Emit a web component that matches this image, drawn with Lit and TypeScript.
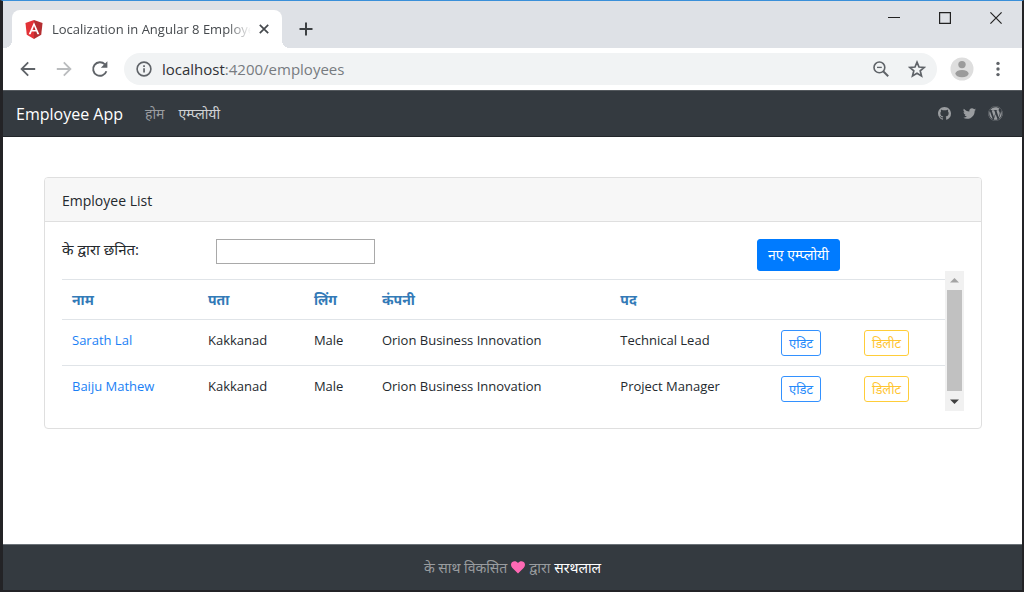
import { LitElement, html, css } from "lit";
import { customElement, state } from "lit/decorators.js";

interface Employee {
  name: string;
  address: string;
  gender: string;
  company: string;
  designation: string;
}

const EMPLOYEES: Employee[] = [
  { name: "Sarath Lal", address: "Kakkanad", gender: "Male", company: "Orion Business Innovation", designation: "Technical Lead" },
  { name: "Baiju Mathew", address: "Kakkanad", gender: "Male", company: "Orion Business Innovation", designation: "Project Manager" },
];

const resets = css`
  :host { display: block; }
  * { box-sizing: border-box; }
  svg { display: block; flex: none; }
  button, input { font: inherit; margin: 0; }
  a { text-decoration: none; color: inherit; }
`;

@customElement("browser-chrome")
export class BrowserChrome extends LitElement {
  static styles = [
    resets,
    css`
      .tabs { display: flex; align-items: flex-end; height: 47px; background: #dee1e6; padding-left: 9px; }
      .tab {
        display: flex; align-items: center; position: relative;
        width: 270px; height: 38px; padding: 0 12px 0 13px;
        background: #fff; border-radius: 8px 8px 0 0;
      }
      .tab::before, .tab::after { content: ""; position: absolute; bottom: 0; width: 8px; height: 8px; }
      .tab::before { left: -8px; background: radial-gradient(circle at 0 0, transparent 8px, #fff 8px); }
      .tab::after { right: -8px; background: radial-gradient(circle at 100% 0, transparent 8px, #fff 8px); }
      .title {
        flex: 1; min-width: 0; margin: 0 7px 0 9px; overflow: hidden; white-space: nowrap;
        font-size: 13px; line-height: 20px; color: #45494d;
        mask-image: linear-gradient(to right, #000 88%, transparent);
      }
      .icon { display: grid; place-items: center; border: 0; padding: 0; background: none; color: #5f6368; }
      .new { width: 48px; height: 38px; color: #3c4043; }
      .caption { display: flex; margin-left: auto; padding-right: 1px; align-self: flex-start; }
      .caption .icon { width: 51px; height: 34px; color: #222; }
      .toolbar { display: flex; align-items: center; height: 42px; padding: 0 6px 0 7px; background: #fff; }
      .toolbar .icon { width: 36px; height: 36px; }
      .toolbar .off { color: #babcbe; }
      .address {
        display: flex; align-items: center; flex: 1; height: 32px; min-width: 0;
        margin: 0 7px 0 6px; padding: 0 2px; background: #f1f3f4; border-radius: 16px;
      }
      .url { flex: 1; font-size: 15px; line-height: 24px; color: #777b80; }
      .host { color: #303236; }
    `,
  ];

  render() {
    return html`
      <div class="tabs">
        <div class="tab">
          <svg width="18" height="19" viewBox="0 0 18 20">
            <path fill="#e23237" d="M9 0 0 3.2l1.4 12.2L9 20z" />
            <path fill="#b52e31" d="M9 0l9 3.2-1.4 12.2L9 20z" />
            <path fill="#fff" fill-rule="evenodd" d="M9 2.4 3.4 15h2.1l1.1-2.8h4.8l1.1 2.8h2.1zM9 6.3l1.6 4.1H7.4z" />
          </svg>
          <div class="title">Localization in Angular 8 Employee</div>
          <button class="icon" aria-label="Close tab">
            <svg width="12" height="12" viewBox="0 0 12 12" stroke="#45494d" stroke-width="1.7"><path d="M1.8 1.8l8.4 8.4M10.2 1.8L1.8 10.2" /></svg>
          </button>
        </div>
        <button class="icon new" aria-label="New tab">
          <svg width="14" height="14" viewBox="0 0 14 14" stroke="currentColor" stroke-width="2"><path d="M7 .5v13M.5 7h13" /></svg>
        </button>
        <div class="caption">
          <button class="icon" aria-label="Minimize">
            <svg width="12" height="12" viewBox="0 0 12 12" stroke="currentColor"><path d="M0 5.500h12" /></svg>
          </button>
          <button class="icon" aria-label="Maximize">
            <svg width="12" height="12" viewBox="0 0 12 12" fill="none" stroke="currentColor" stroke-width="1.2"><path d="M.6 .6h10.8v10.8H.6z" /></svg>
          </button>
          <button class="icon" aria-label="Close">
            <svg width="12" height="12" viewBox="0 0 12 12" stroke="currentColor" stroke-width="1.2"><path d="M.4 .4l11.2 11.2M11.6 .4L.4 11.6" /></svg>
          </button>
        </div>
      </div>
      <div class="toolbar">
        <button class="icon" aria-label="Back">
          <svg width="16" height="16" viewBox="0 0 16 16" fill="none" stroke="currentColor" stroke-width="1.8"><path d="M15.2 8H2M8.2 1.4L1.6 8l6.6 6.6" /></svg>
        </button>
        <button class="icon off" aria-label="Forward">
          <svg width="16" height="16" viewBox="0 0 16 16" fill="none" stroke="currentColor" stroke-width="1.8"><path d="M.8 8H14M7.8 1.4L14.4 8l-6.6 6.6" /></svg>
        </button>
        <button class="icon" aria-label="Reload">
          <svg width="18" height="18" viewBox="0 0 18 18"><path fill="none" stroke="currentColor" stroke-width="1.9" d="M15.4 11.2A6.8 6.8 0 1 1 13.9 4.3" /><path fill="currentColor" d="M16.4 1.2v6.6H9.8z" /></svg>
        </button>
        <div class="address">
          <button class="icon" aria-label="Site information">
            <svg width="16" height="16" viewBox="0 0 16 16"><circle cx="8" cy="8" r="6.9" fill="none" stroke="currentColor" stroke-width="1.6" /><path fill="currentColor" d="M7.2 7.2h1.7v4.4H7.2zM7.2 4.3h1.7V6H7.2z" /></svg>
          </button>
          <div class="url"><span class="host">localhost</span>:4200/employees</div>
          <button class="icon" aria-label="Zoom">
            <svg width="16" height="16" viewBox="0 0 16 16" fill="none" stroke="currentColor" stroke-width="1.6"><circle cx="6.4" cy="6.4" r="5.4" /><path d="M4 6.4h4.8" stroke-width="1.3" /><path d="M10.2 10.2l5 5" stroke-width="2" /></svg>
          </button>
          <button class="icon" aria-label="Bookmark">
            <svg width="18" height="18" viewBox="0 0 18 18" fill="none" stroke="currentColor" stroke-width="1.7"><path d="M9 2.2l2 4.8 5.2.4-4 3.4 1.3 5.1L9 13.2l-4.5 2.7 1.3-5.1-4-3.4L7 7z" /></svg>
          </button>
        </div>
        <button class="icon" aria-label="Profile">
          <svg width="24" height="24" viewBox="0 0 24 24"><circle cx="12" cy="12" r="11.5" fill="#dedede" /><circle cx="12" cy="7.600" r="3.7" fill="#9b9b9b" /><ellipse cx="12" cy="16.6" rx="6.6" ry="3.6" fill="#9b9b9b" /></svg>
        </button>
        <button class="icon" aria-label="Menu">
          <svg width="4" height="16" viewBox="0 0 4 16" fill="currentColor"><circle cx="2" cy="2.4" r="1.7" /><circle cx="2" cy="8" r="1.7" /><circle cx="2" cy="13.6" r="1.7" /></svg>
        </button>
      </div>
    `;
  }
}

@customElement("app-navbar")
export class AppNavbar extends LitElement {
  static styles = [
    resets,
    css`
      nav {
        display: flex; align-items: center; height: 47px; padding: 0 19px 0 13px;
        background: #343a40; border-top: 1px solid #54595e; border-bottom: 1px solid #22262a; color: #9a9da0;
      }
      .brand { font-size: 16px; line-height: 24px; color: #fff; margin-right: 22px; }
      .links { display: flex; gap: 14px; font-size: 14px; line-height: 24px; }
      .active { color: #d0d2d4; }
      .social { display: flex; align-items: center; gap: 12px; margin-left: auto; }
    `,
  ];

  render() {
    return html`
      <nav>
        <a class="brand" href="#">Employee App</a>
        <div class="links">
          <a href="#home">होम</a>
          <a class="active" href="#employees">एम्प्लोयी</a>
        </div>
        <div class="social">
          <a href="#github" aria-label="GitHub">
            <svg width="13" height="13" viewBox="0 0 16 16" fill="currentColor"><path d="M8 0C3.58 0 0 3.58 0 8c0 3.54 2.29 6.53 5.47 7.59.4.07.55-.17.55-.38 0-.19-.01-.82-.01-1.49-2.01.37-2.53-.49-2.69-.94-.09-.23-.48-.94-.82-1.13-.28-.15-.68-.52-.01-.53.63-.01 1.08.58 1.23.82.72 1.21 1.87.87 2.33.66.07-.52.28-.87.51-1.07-1.78-.2-3.64-.89-3.64-3.95 0-.87.31-1.59.82-2.15-.08-.2-.36-1.02.08-2.12 0 0 .67-.21 2.2.82.64-.18 1.32-.27 2-.27s1.36.09 2 .27c1.53-1.04 2.2-.82 2.2-.82.44 1.1.16 1.92.08 2.12.51.56.82 1.27.82 2.15 0 3.07-1.87 3.75-3.65 3.95.29.25.54.73.54 1.48 0 1.07-.01 1.93-.01 2.2 0 .21.15.46.55.38A8 8 0 0 0 16 8c0-4.42-3.58-8-8-8z" /></svg>
          </a>
          <a href="#twitter" aria-label="Twitter">
            <svg width="13" height="13" viewBox="0 0 24 24" fill="currentColor"><path d="M23.95 4.57a10 10 0 0 1-2.82.77 4.96 4.96 0 0 0 2.16-2.72c-.95.55-2 .96-3.13 1.18a4.92 4.92 0 0 0-8.38 4.48C7.69 8.1 4.07 6.13 1.64 3.16a4.92 4.92 0 0 0 1.52 6.57 4.9 4.9 0 0 1-2.23-.61v.06a4.92 4.92 0 0 0 3.95 4.83 5 5 0 0 1-2.21.08 4.94 4.94 0 0 0 4.6 3.42A9.87 9.87 0 0 1 0 19.54a13.99 13.99 0 0 0 7.55 2.21c9.05 0 14-7.5 14-13.98 0-.21 0-.42-.02-.63a9.94 9.94 0 0 0 2.42-2.57z" /></svg>
          </a>
          <a href="#wordpress" aria-label="WordPress">
            <svg width="15" height="15" viewBox="0 0 512 512" fill="currentColor"><path d="M61.7 169.4l101.5 278C92.2 413 43.3 340.2 43.3 256c0-30.9 6.6-60.1 18.4-86.6zm337.9 75.9c0-26.3-9.4-44.5-17.5-58.7-10.8-17.5-20.9-32.4-20.9-49.9 0-19.6 14.8-37.8 35.7-37.8.9 0 1.8.1 2.8.2-37.9-34.7-88.3-55.9-143.7-55.9-74.3 0-139.7 38.1-177.8 95.9 5 .2 9.7.3 13.7.3 22.2 0 56.7-2.7 56.7-2.7 11.5-.7 12.8 16.2 1.4 17.5 0 0-11.5 1.3-24.3 2l77.5 230.4L249.8 247l-33.1-90.8c-11.5-.7-22.3-2-22.3-2-11.5-.7-10.1-18.2 1.3-17.5 0 0 35.1 2.7 56 2.7 22.2 0 56.7-2.7 56.7-2.7 11.5-.7 12.8 16.2 1.4 17.5 0 0-11.5 1.3-24.3 2l76.9 228.7 21.2-70.9c9-29.4 16-50.5 16-68.7zm-139.9 29.3l-63.8 185.5c19.1 5.6 39.2 8.7 60.1 8.7 24.8 0 48.5-4.3 70.6-12.1-.6-.9-1.1-1.9-1.5-2.9l-65.4-179.2zm183-120.7c.9 6.8 1.4 14 1.4 21.9 0 21.6-4 45.8-16.2 76.2l-65 187.9C426.2 403 468.7 334.5 468.7 256c0-37-9.4-71.8-26-102.1zM504 256c0 136.8-111.3 248-248 248C119.2 504 8 392.7 8 256 8 119.2 119.2 8 256 8c136.7 0 248 111.2 248 248zm-11.4 0c0-130.5-106.2-236.6-236.6-236.6C125.5 19.4 19.4 125.5 19.4 256S125.6 492.6 256 492.6c130.5 0 236.6-106.1 236.6-236.6z" /></svg>
          </a>
        </div>
      </nav>
    `;
  }
}

@customElement("employee-list")
export class EmployeeList extends LitElement {
  static styles = [
    resets,
    css`
      .card { border: 1px solid #dfdfdf; border-radius: 4px; background: #fff; color: #24292e; }
      .head {
        margin: 0; padding: 11px 17px 9px; background: #f7f7f7; border-bottom: 1px solid #dfdfdf;
        border-radius: 3px 3px 0 0; font-size: 14px; line-height: 23px; font-weight: 400;
      }
      .body { padding: 17px; }
      .filter { display: grid; grid-template-columns: 154px 1fr 207px; align-items: start; height: 32px; }
      .filter label { font-size: 15px; line-height: 20px; }
      .filter input { width: 159px; height: 25px; padding: 2px 4px; border: 1px solid #a9a9a9; background: #fff; font-size: 14px; }
      .btn { border-radius: 3px; white-space: nowrap; }
      .primary { justify-self: start; height: 32px; padding: 0 10px; border: 1px solid #007bff; background: #007bff; color: #fff; font-size: 14px; line-height: 30px; }
      .scroller { display: grid; grid-template-columns: minmax(0, 1fr) 19px; }
      table { width: 100%; margin-top: 8px; border-collapse: collapse; table-layout: fixed; font-size: 13px; line-height: 20px; }
      th, td { padding: 10px 10px 9px; text-align: left; vertical-align: top; border-top: 1px solid #e0e4e8; white-space: nowrap; }
      th { color: #337ab7; font-size: 14px; font-weight: 700; }
      td a { color: #1a7ff5; }
      .name { width: 15.4%; }
      .address { width: 12%; }
      .gender { width: 7.7%; }
      .company { width: 27%; }
      .designation { width: 18.2%; }
      .edit { width: 9.4%; }
      .small { height: 26px; padding: 0 7px; background: #fff; font-size: 13px; line-height: 24px; vertical-align: top; }
      .outline-primary { border: 1px solid #3391ff; color: #2589fb; }
      .outline-warning { border: 1px solid #ffcd39; color: #ffc530; }
      .track { display: grid; grid-template-rows: 19px 1fr 20px; background: #f1f1f1; justify-items: center; align-items: center; }
      .thumb { width: 15px; height: 100%; background: #c1c1c1; }
    `,
  ];

  @state() private query = "";

  private get rows(): Employee[] {
    const q = this.query.toLowerCase();
    return EMPLOYEES.filter((e) => e.name.toLowerCase().includes(q));
  }

  render() {
    return html`
      <section class="card">
        <h2 class="head">Employee List</h2>
        <div class="body">
          <div class="filter">
            <label for="filter">के द्वारा छनित:</label>
            <input id="filter" type="text" .value=${this.query} @input=${(e: Event) => (this.query = (e.target as HTMLInputElement).value)} />
            <button class="btn primary">नए एम्प्लोयी</button>
          </div>
          <div class="scroller">
            <table>
              <thead>
                <tr>
                  <th class="name">नाम</th>
                  <th class="address">पता</th>
                  <th class="gender">लिंग</th>
                  <th class="company">कंपनी</th>
                  <th class="designation">पद</th>
                  <th class="edit"></th>
                  <th></th>
                </tr>
              </thead>
              <tbody>
                ${this.rows.map(
                  (e) => html`
                    <tr>
                      <td><a href="#employee">${e.name}</a></td>
                      <td>${e.address}</td>
                      <td>${e.gender}</td>
                      <td>${e.company}</td>
                      <td>${e.designation}</td>
                      <td><button class="btn small outline-primary">एडिट</button></td>
                      <td><button class="btn small outline-warning">डिलीट</button></td>
                    </tr>
                  `
                )}
              </tbody>
            </table>
            <div class="track">
              <svg width="9" height="5" viewBox="0 0 9 5" fill="#a3a3a3"><path d="M0 4.5L4.5 0 9 4.5z" /></svg>
              <div class="thumb"></div>
              <svg width="9" height="5" viewBox="0 0 9 5" fill="#404040"><path d="M0 .5h9L4.5 5z" /></svg>
            </div>
          </div>
        </div>
      </section>
    `;
  }
}

@customElement("app-footer")
export class AppFooter extends LitElement {
  static styles = [
    resets,
    css`
      footer {
        display: flex; align-items: center; justify-content: center; gap: 4px; height: 46px;
        border-top: 1px solid #6b7278; background: #343a40; color: #999c9f; font-size: 14px; line-height: 24px;
      }
      .author { color: #fff; }
    `,
  ];

  render() {
    return html`
      <footer>
        <span>के साथ विकसित</span>
        <svg width="14" height="13" viewBox="0 0 14 13" fill="#ff69b4"><path d="M7 12.6L1.2 6.8C-.5 5-.3 2.3 1.3 1 3-.4 5.5 0 7 2 8.5 0 11-.4 12.7 1c1.6 1.3 1.8 4 .1 5.8z" /></svg>
        <span>द्वारा</span>
        <a class="author" href="#author">सरथलाल</a>
      </footer>
    `;
  }
}

@customElement("app-root")
export class AppRoot extends LitElement {
  static styles = [
    resets,
    css`
      .window {
        display: flex; flex-direction: column; min-height: 100vh;
        border: solid #232326; border-width: 1px 2px 2px 3px; border-top-color: #3a8fd9;
        background: #fff; font-family: "Open Sans", "Noto Sans", sans-serif;
      }
      main { flex: 1; padding: 40px 40px 24px 41px; }
    `,
  ];

  render() {
    return html`
      <div class="window">
        <browser-chrome></browser-chrome>
        <app-navbar></app-navbar>
        <main><employee-list></employee-list></main>
        <app-footer></app-footer>
      </div>
    `;
  }
}
